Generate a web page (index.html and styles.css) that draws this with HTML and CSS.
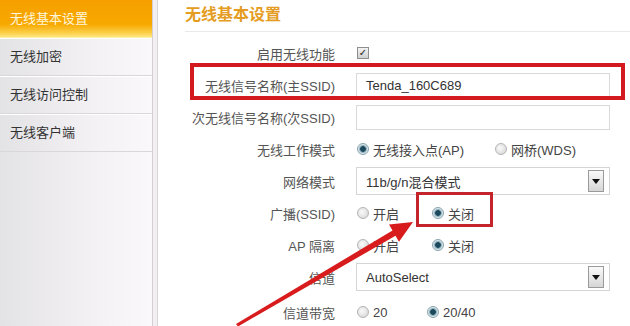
FILE: index.html
```html
<!DOCTYPE html>
<html lang="zh-CN">
<head>
  <meta charset="UTF-8" />
  <meta name="viewport" content="width=device-width, initial-scale=1.0" />
  <title>无线基本设置</title>
  <link rel="stylesheet" href="styles.css">
</head>
<body>
  <div class="page">
    <aside class="side">
      <a class="item active" href="#">无线基本设置</a>
      <a class="item" href="#">无线加密</a>
      <a class="item" href="#">无线访问控制</a>
      <a class="item" href="#">无线客户端</a>
    </aside>

    <main class="main">
      <h1 class="title">无线基本设置</h1>

      <div class="form">
        <div class="row">
          <span class="label">启用无线功能</span>
          <div class="ctl"><span class="check">&#10003;</span></div>
        </div>
        <div class="row">
          <span class="label">无线信号名称(主SSID)</span>
          <div class="ctl"><span class="field">Tenda_160C689</span></div>
        </div>
        <div class="row">
          <span class="label">次无线信号名称(次SSID)</span>
          <div class="ctl"><span class="field"></span></div>
        </div>
        <div class="row">
          <span class="label">无线工作模式</span>
          <div class="ctl opts wide">
            <span class="opt"><i class="radio on"></i>无线接入点(AP)</span>
            <span class="opt"><i class="radio"></i>网桥(WDS)</span>
          </div>
        </div>
        <div class="row">
          <span class="label">网络模式</span>
          <div class="ctl">
            <span class="select">11b/g/n混合模式<i class="drop"></i></span>
          </div>
        </div>
        <div class="row">
          <span class="label">广播(SSID)</span>
          <div class="ctl opts">
            <span class="opt"><i class="radio"></i>开启</span>
            <span class="opt"><i class="radio on"></i>关闭</span>
          </div>
        </div>
        <div class="row">
          <span class="label">AP 隔离</span>
          <div class="ctl opts">
            <span class="opt"><i class="radio"></i>开启</span>
            <span class="opt"><i class="radio on"></i>关闭</span>
          </div>
        </div>
        <div class="row">
          <span class="label">信道</span>
          <div class="ctl">
            <span class="select">AutoSelect<i class="drop"></i></span>
          </div>
        </div>
        <div class="row tall">
          <span class="label">信道带宽</span>
          <div class="ctl opts narrow">
            <span class="opt"><i class="radio"></i>20</span>
            <span class="opt"><i class="radio on"></i>20/40</span>
          </div>
        </div>
      </div>

      <div class="mark mark-ssid"></div>
      <div class="mark mark-off"></div>
      <svg class="arrow" width="472" height="326" viewBox="0 0 472 326">
        <polygon points="78,324 234.5,230.5 231,224.5 255,222 241,241.7 237.5,235.7 80,326.5" fill="#d81c1e" />
      </svg>
    </main>
  </div>
</body>
</html>
```

FILE: styles.css
```css
* {
  box-sizing: border-box;
}

body {
  margin: 0;
  font-family: "Liberation Sans", "Noto Sans CJK SC", sans-serif;
  font-size: 13px;
  background-color: #fff;
  overflow: hidden;
}

.page {
  display: flex;
  height: 326px;
  background-color: #f1eff1;
}

.side {
  width: 153px;
  border-right: 1px solid #d3cfd3;
  background: linear-gradient(to right, #e3e2e5, #f3f1f4 60%, #fbf8fb);
}

.item {
  display: block;
  height: 38px;
  line-height: 36px;
  padding-left: 10px;
  color: #333;
  text-decoration: none;
  border-top: 1px solid #fff;
  border-bottom: 1px solid #d9d7da;
}

.item.active {
  color: #fff6dc;
  border-top-color: #f6a000;
  border-bottom-color: #fff0a8;
  background: linear-gradient(#f5a000, #f8a900 65%, #fcd24e 90%, #ffe680);
}

.main {
  position: relative;
  flex: 1;
  margin-left: 4px;
  padding-left: 27px;
  border-left: 1px solid #d8d4d8;
  background-color: #fff;
}

.title {
  margin: 0;
  height: 32px;
  line-height: 30px;
  font-size: 16px;
  font-weight: bold;
  color: #e49c22;
  border-bottom: 1px solid #e9e9e9;
}

.form {
  margin-top: 5px;
}

.row {
  display: flex;
  align-items: center;
  gap: 21px;
  height: 32px;
  color: #555;
}

.row.tall {
  height: 38px;
}

.label {
  width: 150px;
  text-align: right;
  white-space: nowrap;
}

.ctl {
  display: flex;
  align-items: center;
  width: 254px;
  padding-left: 1px;
}

.check {
  width: 12px;
  height: 12px;
  border: 1px solid #8e8e8e;
  background: linear-gradient(#f4f4f4, #cfcfcf);
  color: #222;
  font-size: 10px;
  line-height: 10px;
  text-align: center;
  font-family: "DejaVu Sans", sans-serif;
}

.field {
  display: block;
  width: 254px;
  height: 25px;
  line-height: 23px;
  padding-left: 9px;
  margin-left: -1px;
  border: 1px solid #d9d9d9;
  color: #333;
  background-color: #fff;
}

.select {
  display: flex;
  align-items: center;
  justify-content: space-between;
  width: 254px;
  height: 28px;
  margin-left: -1px;
  padding: 0 5px 0 9px;
  border: 1px solid #d5d5d5;
  color: #333;
}

.drop {
  width: 16px;
  height: 22px;
  border: 1px solid #9a9a9a;
  background: linear-gradient(#fafafa, #d6d6d6);
  position: relative;
}

.drop::after {
  content: "";
  position: absolute;
  left: 3px;
  top: 8px;
  border-left: 4px solid transparent;
  border-right: 4px solid transparent;
  border-top: 5px solid #111;
}

.opt {
  display: inline-flex;
  align-items: center;
  gap: 4px;
  color: #444;
}

.opts .opt:first-child {
  width: 75px;
}

.opts.wide .opt:first-child {
  width: 138px;
}

.opts.narrow .opt:first-child {
  width: 70px;
}

.radio {
  width: 12px;
  height: 12px;
  border-radius: 50%;
  border: 1px solid #b4b4b4;
  background: radial-gradient(circle at 40% 40%, #fafafa, #d2d2d2);
}

.radio.on {
  border-color: #8aa3ad;
  background: radial-gradient(circle, #1c4a5c 0 2.5px, #6f98a8 3px, #d9e6ea 4.5px);
}

.mark {
  position: absolute;
  border-style: solid;
}

.mark-ssid {
  left: 32px;
  top: 63px;
  width: 435px;
  height: 37px;
  border-width: 4px;
  border-color: #d21a1f;
}

.mark-off {
  left: 258px;
  top: 192px;
  width: 77px;
  height: 35px;
  border-width: 3px;
  border-color: #c4252b;
}

.arrow {
  position: absolute;
  left: 0;
  top: 0;
}
```
